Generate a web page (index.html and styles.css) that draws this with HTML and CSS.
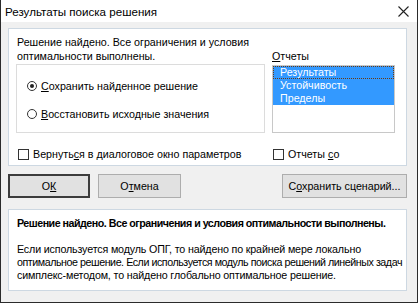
FILE: index.html
```html
<!DOCTYPE html>
<html lang="ru">
<head>
  <meta charset="UTF-8" />
  <title>Результаты поиска решения</title>
  <link rel="stylesheet" href="styles.css">
</head>
<body>
  <div class="window">
    <div class="titlebar">
      <span class="title">Результаты поиска решения</span>
      <svg class="close" width="11" height="11" viewBox="0 0 11 11"><path d="M0.5 0.5 L10.5 10.5 M10.5 0.5 L0.5 10.5" stroke="#222" stroke-width="1.1" fill="none"/></svg>
    </div>

    <div class="content">
      <div class="panel main">
        <div class="message">Решение найдено. Все ограничения и условия оптимальности выполнены.</div>
        <div class="reports-label"><u>О</u>тчеты</div>

        <div class="group">
          <label class="option"><span class="radio checked"></span><span><u>С</u>охранить найденное решение</span></label>
          <label class="option"><span class="radio"></span><span><u>В</u>осстановить исходные значения</span></label>
        </div>
        <div class="listbox">
          <div class="item selected focus">Результаты</div>
          <div class="item selected">Устойчивость</div>
          <div class="item selected">Пределы</div>
        </div>

        <label class="check"><span class="box"></span><span>Вернуть<u>с</u>я в диалоговое окно параметров</span></label>
        <label class="check right"><span class="box"></span><span>Отчеты <u>с</u>о</span></label>
      </div>

      <div class="buttons">
        <button class="btn default">О<u>К</u></button>
        <button class="btn">О<u>т</u>мена</button>
        <button class="btn wide">С<u>о</u>хранить сценарий...</button>
      </div>

      <div class="panel info">
        <p class="bold">Решение найдено. Все ограничения и условия оптимальности выполнены.</p>
        <p class="note">
          <span class="line">Если используется модуль ОПГ, то найдено по крайней мере локально</span>
          <span class="line tight">оптимальное решение. Если используется модуль поиска решений линейных задач</span>
          <span class="line">симплекс-методом, то найдено глобально оптимальное решение.</span>
        </p>
      </div>
    </div>
  </div>
</body>
</html>
```

FILE: styles.css
```css
* { box-sizing: border-box; }
body { margin: 0; font-family: "Liberation Sans", Arial, sans-serif; font-size: 10.7px; color: #000; }
u { text-decoration: underline; text-underline-offset: 1px; }

.window { width: 418px; height: 303px; background: #f0f0f0; border: 1px solid #2b2b2b; border-top: 0; }
.titlebar { height: 22px; background: #fff; display: flex; align-items: center; justify-content: space-between; padding: 0 8px 0 4px; }
.title { font-size: 11.6px; }
.close { margin-top: 1px; }

.content { padding: 6px 10px 0 7px; }
.panel { background: #fff; border: 1px solid #cdd8e2; }

.main { height: 138px; padding: 6px 13px 0 7px; display: grid; grid-template-columns: 249px 123px; column-gap: 7px; grid-template-rows: 29px 69px auto; }
.message { line-height: 14px; padding-left: 1px; }
.reports-label { align-self: end; line-height: 14px; margin-bottom: 1px; }

.group { border: 1px solid #dcdcdc; padding: 15px 0 0 10px; display: flex; flex-direction: column; gap: 16px; }
.option { display: flex; align-items: center; gap: 4px; line-height: 12px; }
.radio { width: 10px; height: 10px; border: 1px solid #333; border-radius: 50%; display: flex; align-items: center; justify-content: center; }
.radio.checked::after { content: ""; width: 4px; height: 4px; border-radius: 50%; background: #222; }

.listbox { margin-top: 1px; height: 68px; border: 1px solid #c8c8c8; }
.item { height: 13px; line-height: 13px; padding-left: 7px; overflow: hidden; }
.item.selected { background: #3399ff; color: #fff; }
.item.focus { outline: 1px dotted #6b3b12; outline-offset: -1px; }

.check { display: flex; align-items: center; gap: 4px; margin-top: 10px; padding-left: 2px; line-height: 13px; }
.check.right { padding-left: 1px; }
.box { width: 11px; height: 11px; border: 1px solid #333; background: #fff; }

.buttons { display: flex; gap: 8px; margin-top: 8px; height: 24px; }
.btn { font: inherit; height: 24px; width: 83px; background: #e1e1e1; border: 1px solid #adadad; padding: 0; color: #000; }
.btn.default { width: 82px; border: 2px solid #3c3c3c; }
.btn.wide { width: 125px; margin-left: auto; }

.info { margin-top: 11px; height: 82px; padding: 7px 0 0 8px; line-height: 13px; }
.info p { margin: 0; }
.info .bold { font-weight: bold; letter-spacing: -0.5px; margin-bottom: 13px; white-space: nowrap; }
.info .line { display: block; white-space: nowrap; letter-spacing: -0.15px; }
.info .line.tight { letter-spacing: -0.45px; }
```
